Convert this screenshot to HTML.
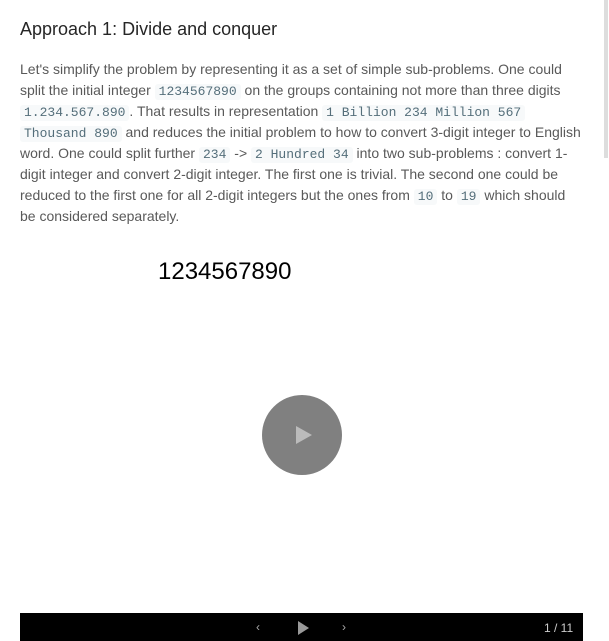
<!DOCTYPE html>
<html><head><meta charset="utf-8"><style>
body{margin:0;width:609px;height:641px;overflow:hidden;background:#fff;font-family:"Liberation Sans",sans-serif;position:relative}
h1{position:absolute;left:20px;top:19px;margin:0;font-size:18px;font-weight:normal;color:#262626}
.t{position:absolute;left:20px;top:59px;font-size:14px;line-height:21px;color:#595959}
.t div{white-space:nowrap;height:21px}
code{font-family:"Liberation Mono",monospace;font-size:13px;line-height:16px;display:inline-block;background:#f7f9fa;color:#546e7a;padding:0 4px;border-radius:3px;vertical-align:0}
.sb{position:absolute;left:604px;top:0;width:4px;height:158px;background:#ddd}
.num{position:absolute;left:158px;top:258px;font-size:24px;color:#000}
.c{position:absolute;left:262px;top:395px;width:80px;height:80px;border-radius:50%;background:#808080}
.c:after{content:"";position:absolute;left:34px;top:31px;border-left:16px solid #bbb;border-top:9px solid transparent;border-bottom:9px solid transparent}
.bar{position:absolute;left:20px;top:613px;width:563px;height:28px;background:#000;color:#aaa;font-size:12px}
</style></head><body>
<div class="sb"></div>
<h1>Approach 1: Divide and conquer</h1>
<div class="t">
<div>Let's simplify the problem by representing it as a set of simple sub-problems. One could</div>
<div>split the initial integer <code>1234567890</code> on the groups containing not more than three digits</div>
<div><code>1.234.567.890</code>. That results in representation <code>1 Billion 234 Million 567</code></div>
<div><code>Thousand 890</code> and reduces the initial problem to how to convert 3-digit integer to English</div>
<div>word. One could split further <code>234</code> -&gt; <code>2 Hundred 34</code> into two sub-problems : convert 1-</div>
<div>digit integer and convert 2-digit integer. The first one is trivial. The second one could be</div>
<div>reduced to the first one for all 2-digit integers but the ones from <code>10</code> to <code>19</code> which should</div>
<div>be considered separately.</div>
</div>
<div class="num">1234567890</div>
<div class="c"></div>
<div class="bar">
<span style="position:absolute;left:236px;top:7px">‹</span>
<span style="position:absolute;left:278px;top:8px;border-left:11px solid #999;border-top:7px solid transparent;border-bottom:7px solid transparent;width:0;height:0"></span>
<span style="position:absolute;left:322px;top:7px">›</span>
<span style="position:absolute;left:524px;top:8px;color:#ccc">1 / 11</span>
</div>
</body></html>
